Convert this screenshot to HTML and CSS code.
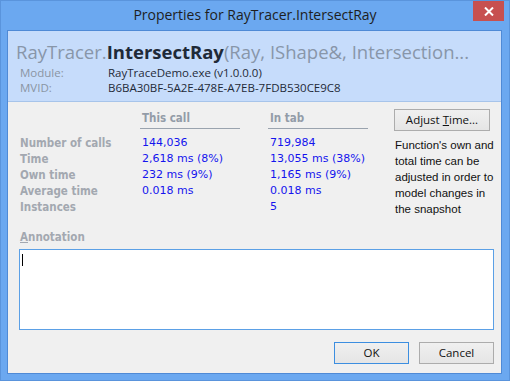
FILE: index.html
```html
<!DOCTYPE html>
<html>

<head>
  <meta charset="utf-8" />
  <title>Properties for RayTracer.IntersectRay</title>
  <link rel="stylesheet" href="styles.css">
</head>

<body>
  <div class="ventana">
    <div class="barra-titulo">
      <div class="titulo">Properties for RayTracer.IntersectRay</div>
      <div class="cerrar">
        <svg width="10" height="9" viewBox="0 0 10 9">
          <path d="M1 0.5 L9 8.5 M9 0.5 L1 8.5" stroke="#fff" stroke-width="2" />
        </svg>
      </div>
    </div>
    <div class="cliente">
      <div class="cabecera">
        <div class="funcion">RayTracer.<b>IntersectRay</b>(Ray, IShape&amp;, Intersection...</div>
        <div class="info-fila">
          <span class="info-etiqueta">Module:</span>
          <span class="info-valor">RayTraceDemo.exe (v1.0.0.0)</span>
        </div>
        <div class="info-fila">
          <span class="info-etiqueta">MVID:</span>
          <span class="info-valor">B6BA30BF-5A2E-478E-A7EB-7FDB530CE9C8</span>
        </div>
      </div>
      <div class="contenido">
        <div class="zona-stats">
          <div class="stats">
            <div></div>
            <div class="col-titulo">This call</div>
            <div class="col-titulo">In tab</div>

            <div class="etiqueta">Number of calls</div>
            <div class="valor">144,036</div>
            <div class="valor">719,984</div>

            <div class="etiqueta">Time</div>
            <div class="valor">2,618 ms (8%)</div>
            <div class="valor">13,055 ms (38%)</div>

            <div class="etiqueta">Own time</div>
            <div class="valor">232 ms (9%)</div>
            <div class="valor">1,165 ms (9%)</div>

            <div class="etiqueta">Average time</div>
            <div class="valor">0.018 ms</div>
            <div class="valor">0.018 ms</div>

            <div class="etiqueta">Instances</div>
            <div class="valor"></div>
            <div class="valor">5</div>
          </div>
          <div class="lateral">
            <div class="boton boton-ajuste">Adjust <u>T</u>ime...</div>
            <div class="nota">Function's own and<br>total time can be<br>adjusted in order to<br>model changes in<br>the snapshot</div>
          </div>
        </div>
        <div class="etiqueta anotacion"><u>A</u>nnotation</div>
        <div class="caja-texto"><span class="cursor"></span></div>
        <div class="botones">
          <div class="boton boton-ok">OK</div>
          <div class="boton">Cancel</div>
        </div>
      </div>
    </div>
  </div>
</body>

</html>
```

FILE: styles.css
```css
body {
  margin: 0;
  background: #ffffff;
}

.ventana {
  width: 508px;
  height: 379px;
  border: solid 1px #5a94dc;
  background: #6ba8f0;
  display: flex;
  flex-direction: column;
}

.barra-titulo {
  height: 29px;
  display: grid;
  grid-template-columns: 1fr auto 1fr;
}

.titulo {
  grid-column: 2;
  font-family: "Open Sans", sans-serif;
  font-size: 14px;
  color: #1e1e1e;
  line-height: 28px;
}

.cerrar {
  grid-column: 3;
  justify-self: end;
  align-self: start;
  width: 31px;
  height: 20px;
  margin-right: 5px;
  background: #c75050;
  display: flex;
  align-items: center;
  justify-content: center;
}

.cliente {
  margin: 0 7px 6px 6px;
  flex: 1;
  border: solid 1px #4f8ad6;
  background: #f0f0f0;
  display: flex;
  flex-direction: column;
}

.cabecera {
  height: 70px;
  background: #c6dcfb;
  border-bottom: solid 1px #a7c4ea;
  padding-left: 8px;
}

.funcion {
  font-family: "Open Sans", sans-serif;
  font-size: 18.5px;
  color: #8896a9;
  line-height: 26px;
  margin-top: 8px;
  white-space: nowrap;
}

.funcion b {
  color: #1f2a38;
}

.info-fila {
  font-family: "Open Sans", sans-serif;
  font-size: 11.5px;
  line-height: 15px;
  display: flex;
}

.info-etiqueta {
  color: #8a95a3;
  width: 88px;
  padding-left: 4px;
}

.info-valor {
  color: #1f2a38;
}

.contenido {
  padding: 7px 7px 0 12px;
}

.zona-stats {
  display: flex;
}

.stats {
  display: grid;
  grid-template-columns: 120px 128px 126px;
  grid-auto-rows: 16px;
  grid-template-rows: 26px;
  line-height: 16px;
}

.col-titulo {
  width: 98px;
  height: 16px;
  padding: 1px 0 2px 2px;
  border-bottom: solid 1px #9aa3ae;
  font-family: "DejaVu Sans Condensed", "DejaVu Sans", sans-serif;
  font-size: 11.5px;
  color: #939ca8;
  font-weight: bold;
}

.etiqueta {
  font-family: "DejaVu Sans Condensed", "DejaVu Sans", sans-serif;
  font-size: 11.5px;
  line-height: 16px;
  color: #a3a8b0;
  font-weight: bold;
}

.valor {
  padding-left: 2px;
  font-family: "DejaVu Sans", sans-serif;
  font-size: 11px;
  color: #1414ee;
}

.lateral {
  width: 96px;
}

.boton {
  height: 20px;
  border: solid 1px #acacac;
  background: linear-gradient(#f0f0f0, #e5e5e5);
  font-family: "Open Sans", sans-serif;
  font-size: 11.5px;
  line-height: 20px;
  color: #111111;
  text-align: center;
}

.nota {
  margin-top: 6px;
  padding-left: 1px;
  font-family: "Liberation Sans", sans-serif;
  font-size: 11.5px;
  line-height: 16px;
  color: #111111;
  white-space: nowrap;
}

.anotacion {
  margin-top: 12px;
}

.caja-texto {
  margin: 4px 0 0 -1px;
  height: 79px;
  border: solid 1px #5ba0e6;
  background: #ffffff;
}

.cursor {
  display: block;
  width: 1px;
  height: 12px;
  margin: 4px 0 0 2px;
  background: #000000;
}

.botones {
  display: flex;
  justify-content: flex-end;
  gap: 10px;
  margin-top: 12px;
}

.botones .boton {
  width: 73px;
}

.boton-ok {
  border-color: #3c8ee0;
}
```
